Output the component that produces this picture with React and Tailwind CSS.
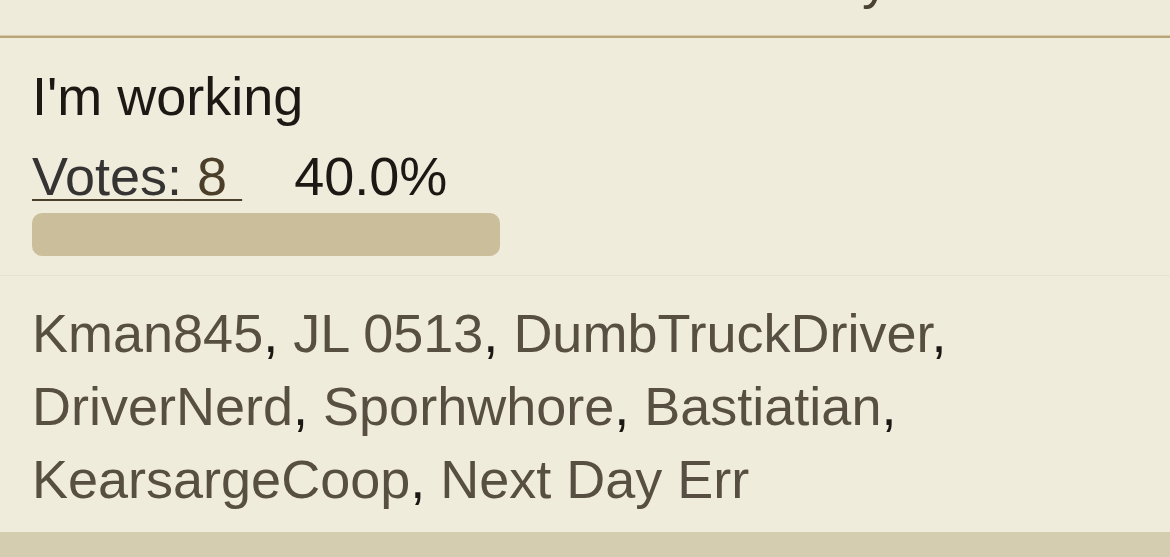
// Poll option row: answer text, vote count with share, bar and voter list
const voters = [
  "Kman845",
  "JL 0513",
  "DumbTruckDriver",
  "DriverNerd",
  "Sporhwhore",
  "Bastiatian",
  "KearsargeCoop",
  "Next Day Err",
];

const App = () => {
  return (
    <div
      className="w-[1170px] h-[557px] overflow-hidden bg-[#f0ecdc] flex flex-col"
      style={{ fontFamily: '"Liberation Sans", Arial, sans-serif' }}
    >
      {/* tail of the previous row, cut off above */}
      <div className="h-[35px] overflow-hidden bg-[#efebdb]">
        <div className="pl-[862px] -mt-[48px] text-[54px] leading-none text-[#4a4233]">
          y
        </div>
      </div>
      <div className="h-px bg-[#d6caa7]" />
      <div className="h-[2px] bg-[#b8a67b]" />

      {/* option */}
      <div className="px-8 pt-[22px] pb-[19px]">
        <p className="text-[54px] leading-[73px] text-[#1c1915]">I'm working</p>
        <div className="mt-[7px] text-[54px] leading-[73px] text-[#1c1915]">
          <a className="text-[#4b3f2a] underline decoration-2 underline-offset-4">
            <span className="text-[#353433]">Votes:</span> 8&nbsp;
          </a>
          <span className="ml-[52px]">40.0%</span>
        </div>
        <div className="w-[468px] h-[43px] rounded-[10px] bg-[#cbbe9b]" />
      </div>
      <div className="h-px bg-[#e8e3d1]" />

      {/* who voted */}
      <div className="px-8 pt-[21px] pb-[16px] text-[54px] leading-[73px] text-[#1c1915] pr-[200px]">
        {voters.map((name, i) => (
          <span key={name}>
            <a className="text-[#574f41]">{name}</a>
            {i < voters.length - 1 ? ", " : ""}
          </span>
        ))}
      </div>

      <div className="flex-1 bg-[#d5cdb0]" />
    </div>
  );
};

export default App;
